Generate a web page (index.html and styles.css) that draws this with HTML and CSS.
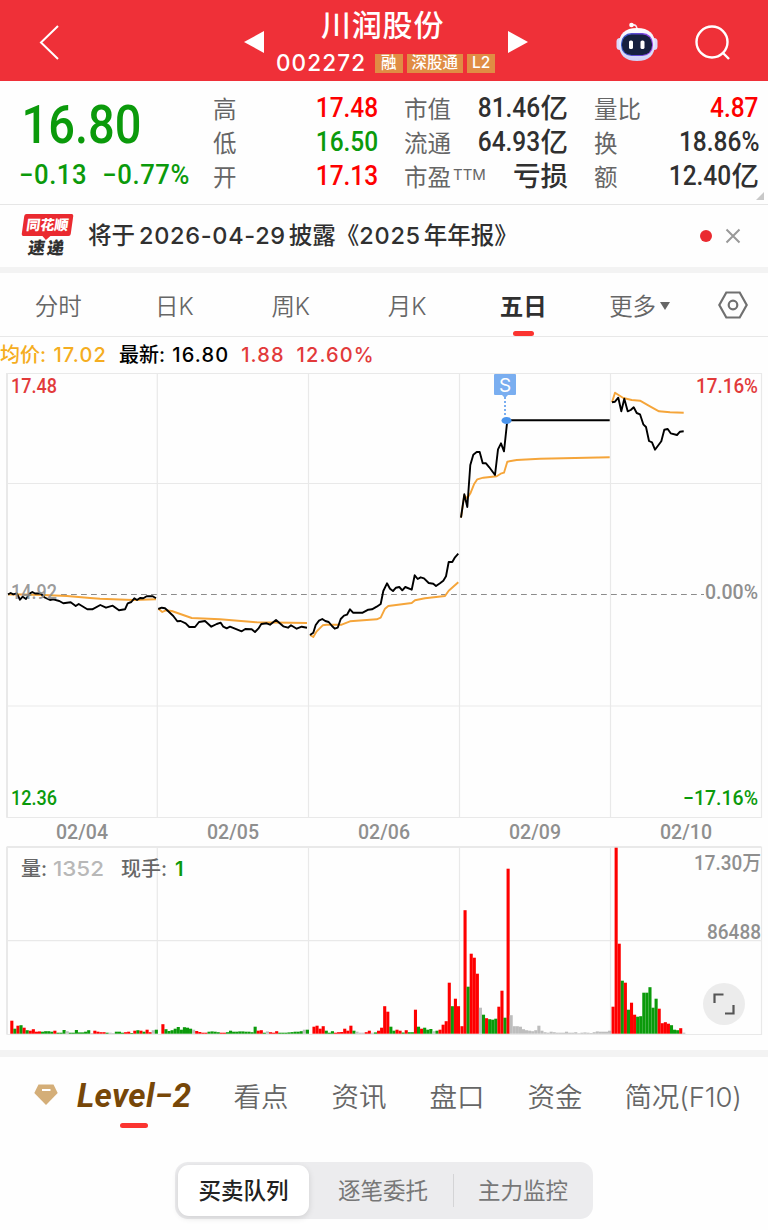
FILE: index.html
```html
<!DOCTYPE html>
<html lang="zh-CN">
<head>
    <meta charset="UTF-8">
    <title>川润股份 002272</title>
    <link rel="stylesheet" href="styles.css">
</head>
<body>
    <header class="topbar">
        <svg class="back" width="22" height="36" viewBox="0 0 22 36"><path d="M20 2 3 18.500 20 35"/></svg>
        <svg class="prev" width="20" height="22" viewBox="0 0 20 22"><path d="M0 11 20 0V22z"/></svg>
        <div class="stock">
            <h1>川润股份</h1>
            <div class="code-row">
                <span class="code">002272</span>
                <span class="tag">融</span>
                <span class="tag">深股通</span>
                <span class="tag">L2</span>
            </div>
        </div>
        <svg class="next" width="20" height="22" viewBox="0 0 20 22"><path d="M20 11 0 0V22z"/></svg>
        <svg class="robot" width="44" height="42" viewBox="0 0 44 42">
            <defs>
                <linearGradient id="head" x1="0" y1="0" x2="0" y2="1"><stop offset="0" stop-color="#fff"/><stop offset="1" stop-color="#cfd0f7"/></linearGradient>
                <linearGradient id="face" x1="0" y1="0" x2="1" y2="0"><stop offset="0" stop-color="#355cc4"/><stop offset="0.600" stop-color="#6a45d8"/><stop offset="1" stop-color="#a04be8"/></linearGradient>
            </defs>
            <path d="M21 9C21 5 19.500 3.500 16.500 4" fill="none" stroke="#f4e6f4" stroke-width="1.600"/>
            <circle cx="15.500" cy="4" r="2.300" fill="#fff"/>
            <rect x="0.500" y="17" width="7" height="12" rx="3.500" fill="#dcd9fa"/>
            <rect x="34.500" y="17" width="7" height="12" rx="3.500" fill="#dcd9fa"/>
            <path d="M21 7C33 7 39 13 39 23 39 34 33 40 21 40S3 34 3 23C3 13 9 7 21 7z" fill="url(#head)"/>
            <rect x="5" y="12" width="32" height="23" rx="10.500" fill="url(#face)"/>
            <rect x="6" y="13.500" width="30" height="20.500" rx="9.500" fill="#16203f"/>
            <rect x="13" y="19.500" width="4" height="8.500" rx="1.600" fill="#fff"/>
            <rect x="24.500" y="19.500" width="4" height="8.500" rx="1.600" fill="#fff"/>
        </svg>
        <svg class="search" width="36" height="36" viewBox="0 0 36 36"><circle cx="17" cy="17" r="15.500"/><path d="M28 28 34 34"/></svg>
    </header>

    <section class="quote">
        <div class="price">
            <strong>16.80</strong>
            <div class="change"><span>−0.13</span><span>−0.77%</span></div>
        </div>
        <dl class="stats">
            <div><dt>高</dt><dd class="up"><b>17.48</b></dd></div>
            <div><dt>市值</dt><dd><b>81.46</b>亿</dd></div>
            <div><dt>量比</dt><dd class="up"><b>4.87</b></dd></div>
            <div><dt>低</dt><dd class="down"><b>16.50</b></dd></div>
            <div><dt>流通</dt><dd><b>64.93</b>亿</dd></div>
            <div><dt>换</dt><dd><b>18.86%</b></dd></div>
            <div><dt>开</dt><dd class="up"><b>17.13</b></dd></div>
            <div><dt>市盈<small>TTM</small></dt><dd>亏损</dd></div>
            <div><dt>额</dt><dd><b>12.40</b>亿</dd></div>
        </dl>
        <i class="corner"></i>
    </section>

    <section class="notice">
        <div class="brand">
            <span class="brand-top">同花顺</span>
            <span class="brand-bottom">速递</span>
        </div>
        <p>将于<b>2026-04-29</b>披露《<b class="year">2025</b>年年报》</p>
        <i class="dot"></i>
        <svg class="close" width="16" height="16" viewBox="0 0 16 16"><path d="M1.500 1.500 14.500 14.500M14.500 1.500 1.500 14.500"/></svg>
    </section>

    <nav class="periods">
        <a>分时</a>
        <a>日K</a>
        <a>周K</a>
        <a>月K</a>
        <a class="active">五日</a>
        <a class="more">更多<i></i></a>
        <svg class="setting" width="30" height="28" viewBox="0 0 30 28"><path d="M8.300 1.500H21.700L28.700 14 21.700 26.500H8.300L1.300 14z"/><circle cx="15" cy="14" r="4.300"/></svg>
    </nav>

    <div class="legend">
        <span class="avg">均价: <b>17.02</b></span>
        <span>最新: <b>16.80</b></span>
        <span class="rise"><b>1.88</b></span>
        <span class="rise"><b>12.60%</b></span>
    </div>

    <svg class="chart" width="768" height="677" viewBox="0 373 768 677">
        <g class="grid">
            <path d="M7 373.500H761.500V817.500H7zM7 483.500H761M7 706H761"/>
            <path d="M157.300 374V817M308.500 374V817M459.500 374V817M610.500 374V817"/>
            <path d="M7 847H761.500V1034.500H7zM7 940.700H761"/>
            <path d="M157.300 847V1034M308.500 847V1034M459.500 847V1034M610.500 847V1034"/>
            <path class="edge" d="M7 373V817.500M7 847V1034M7 847H761"/>
        </g>
        <path class="zero" d="M61 594.500H704"/>
        <g class="avg-line">
            <polyline points="8,594.5 13,594.3 43,595 67,596 90,598 100,598.7 133,600 156,599.3"/>
            <polyline points="158.3,608.7 162.3,612 165.7,610.3 171.7,611 191.7,618 220,619.3 256.7,622.3 307,623"/>
            <polyline points="310,635 313.3,637 316.7,631.3 322.7,625.3 326.7,624.7 341.7,624.7 350,621.3 376.7,619.3 380.7,617.7 385,608.7 388.3,606 411.7,603 415,600.3 425,598.3 445,596 448.7,590.7 458.3,582.3"/>
            <polyline points="461,517.7 464.3,495.3 467.3,498.3 470.7,492.7 474,484.3 477.3,479.3 483.3,477.7 496.7,476.3 500.7,473.7 504,472.7 507.3,461.7 516.7,460 540,458.7 609.7,457.3"/>
            <polyline points="612,402.3 615,392.7 623.3,398 631.7,400 640,400.7 650,406.3 659,411.3 670,412.3 683.7,412.7"/>
        </g>
        <g class="price-line">
            <polyline points="8,594.3 10.7,593 13.3,594.3 16.7,593.3 20,599.7 22.7,596.7 26,599 30,593.3 32.3,592 35,593.5 40.7,593.5 44.7,597.5 50,600 53.3,599.3 59.3,601 63.3,603.3 70.7,602.3 75.7,606 78.7,604 87.3,609.3 92.3,609.3 100.3,605 106,607.7 112.7,605.7 119,610.3 125,609.3 127.7,603.3 131.3,602 134.3,598.3 137,600 140,598 143.3,598.3 146.7,596.3 152.7,596.3 156,598.3"/>
            <polyline points="158.3,609 161.7,607.7 165,608.3 168.3,611.3 173.3,616 177.3,621.3 180.7,621 185.7,623.3 189.3,627 195,627 199,622 205,621 211.3,626.7 216.7,624 220.7,622.7 223.3,626.7 226.7,628.3 230,626.7 241.7,631.3 245.3,629 251.7,629.3 255,632 258.3,628.7 261.3,624 266.7,623.3 270,624.7 276,620 283.3,626.3 288,627.7 291,625.3 296.7,628.7 301.7,626.7 307,627.7"/>
            <polyline points="310,635 313.3,632.7 315.7,625 319,620.7 322.3,619 325.3,621 328.7,622 332,626 334.7,628.7 337.7,627.7 340.7,619 344,615.7 347,614.7 350,609.3 353,612.7 362.7,612.7 368.3,609.7 372,609.3 376.7,606.7 380.7,604 383.3,591 387,583.3 390,588.7 393,591 396,587.7 399.3,587 402.3,590.3 405.3,587 411.7,589.7 414.7,575.3 417.7,579 420.7,577.3 424,578.3 428.7,583 433.3,583.7 436,586 440,583.3 443.3,580.7 446,576.3 448.7,562 452.3,562 455,557.3 458.3,553.7"/>
            <polyline points="461,517.7 464.3,494.3 467.3,507 470.3,465 473.3,454.7 476.7,452 479.7,452 482.7,463.3 486,463.3 489.3,467.3 495,475 498,449.3 501,443.3 504,451.3 507.3,420.3 609.7,420.3"/>
            <polyline points="612,402.3 615,401.7 618.3,397.7 621.3,411.3 624.3,398.7 627.7,411.3 630.7,410 633.7,407.3 636.7,413 640,414.3 643.3,424.3 646,427 649,441 652,442.3 655,449.7 661.3,441.3 664.3,429.7 667.7,429 670.7,433.3 677,435 680,431.7 683.7,431.3"/>
        </g>
        <g class="sell">
            <path d="M505 397V416"/>
            <path class="flag" d="M495 374H515a1 1 0 0 1 1 1V394a1 1 0 0 1-1 1H508L505 398 502 395H495a1 1 0 0 1-1-1V375a1 1 0 0 1 1-1z"/>
            <ellipse cx="506.500" cy="420.500" rx="5" ry="3.600"/>
            <text x="505" y="391.500" text-anchor="middle">S</text>
        </g>
        <text class="muted base" x="11" y="599" textLength="46" lengthAdjust="spacingAndGlyphs">14.92</text>
        <text class="red" x="11" y="393" textLength="46" lengthAdjust="spacingAndGlyphs">17.48</text>
        <text class="red" x="696" y="393" textLength="62" lengthAdjust="spacingAndGlyphs">17.16%</text>
        <text class="muted" x="705" y="599" textLength="53" lengthAdjust="spacingAndGlyphs">0.00%</text>
        <text class="green" x="11" y="805" textLength="46" lengthAdjust="spacingAndGlyphs">12.36</text>
        <text class="green" x="683" y="805" textLength="75" lengthAdjust="spacingAndGlyphs">−17.16%</text>
        <g class="muted">
            <text x="56" y="838.500" textLength="52" lengthAdjust="spacingAndGlyphs">02/04</text>
            <text x="207" y="838.500" textLength="52" lengthAdjust="spacingAndGlyphs">02/05</text>
            <text x="358" y="838.500" textLength="52" lengthAdjust="spacingAndGlyphs">02/06</text>
            <text x="509" y="838.500" textLength="52" lengthAdjust="spacingAndGlyphs">02/09</text>
            <text x="660" y="838.500" textLength="52" lengthAdjust="spacingAndGlyphs">02/10</text>
            <text x="694" y="869.500" textLength="67" lengthAdjust="spacingAndGlyphs">17.30万</text>
            <text x="707" y="939" textLength="54" lengthAdjust="spacingAndGlyphs">86488</text>
        </g>
        <g id="volume"></g>
        <g class="vol-legend">
            <text x="21" y="876">量:</text>
            <text class="pale" x="53" y="876" textLength="51" lengthAdjust="spacingAndGlyphs">1352</text>
            <text x="121" y="876">现手:</text>
            <text class="now" x="175" y="876">1</text>
        </g>
        <g class="expand">
            <circle cx="724" cy="1004" r="21"/>
            <path d="M714.500 1003V994.500H723.500M733.500 1005V1013.500H725"/>
        </g>
    </svg>

    <nav class="sections">
        <svg class="diamond" width="24" height="22" viewBox="0 0 24 22"><path d="M4.500 0.500H19.500L23.700 9 12 21 0.300 9z"/><path class="shine" d="M8 6H16.500"/></svg>
        <a class="level">Level−2</a>
        <a>看点</a>
        <a>资讯</a>
        <a>盘口</a>
        <a>资金</a>
        <a>简况(F10)</a>
    </nav>

    <div class="segment">
        <button class="on">买卖队列</button>
        <button>逐笔委托</button>
        <button>主力监控</button>
    </div>

    <script>
        // one string per day: height + colour (r up, g down, n flat), 49 slots each
        const days = [
            '0n 13r 5g 8r 8.5g 6r 3.5g 3r 4.5r 2r 2.3r 2g 2.5g 2.5g 2g 3r 1g 1g 3.7g 2.5n 1g 1g 3.7g 1.3g 1.3g 2g 3.5g 0.7n 3r 2r 1.5r 1.5r 1g 1n 0.7n 2g 2g 1g 1.5r 2r 0.7g 3r 3.5g 3r 2g 4r 1.5r 3.5n 4g',
            '0n 9.5r 4.5g 2.7g 3.5g 5g 6.7g 4g 6.5g 6g 5g 4n 2.7r 1.7r 1r 1r 2g 2.3g 2g 1.5g 1r 1r 1.5g 3g 2g 2g 2.3g 2.3g 2g 2g 1.5g 7g 3r 3.5r 1g 2.3n 1.5r 1r 2.5r 1g 1g 1g 1.3g 1.6g 2g 2g 2.5g 4n 4g',
            '0n 7r 8r 5r 7.5r 3g 1g 2.5g 1r 1.5r 1.7r 5r 3r 8r 3g 2n 1n 1n 1.5r 3r 1n 1.3g 3r 6r 27.5r 22r 7g 3g 4r 3r 1.2g 3.5r 1.5g 1.5g 24r 7g 5r 6g 4g 4.7g 2.5n 3g 4r 9r 12.5r 51r 27.5g 35r 27.5r',
            '7.5r 123.5r 47g 80r 76r 60r 26n 19g 15.5r 14.5g 14g 15g 27r 43r 16g 165r 18.5n 7.5n 7.5n 7n 4.5n 3.5n 3n 2.5n 3.5n 8n 3n 1.5n 1n 2n 1.5n 1n 1n 1n 2n 1n 1n 1.5n 0.5n 1n 1.3n 1n 0.7n 1.5n 2.3n 2n 2n 2n 3n',
            '27r 186r 90r 53g 51r 24g 31r 19r 17g 17.5g 41g 41g 46.5g 26g 35g 25r 10.5r 11.5r 10r 8.5g 4g 3.5g 5.5r 1n'
        ];
        const colors = { r: '#fe0000', g: '#0b9a0b', n: '#bdbdbd' };
        const volume = document.getElementById('volume');

        days.forEach((day, d) => {
            day.split(' ').forEach((bar, i) => {
                const h = parseFloat(bar);
                const rect = document.createElementNS('http://www.w3.org/2000/svg', 'rect');
                rect.setAttribute('x', (7.2 + d * 151.08 + i * 3.075).toFixed(2));
                rect.setAttribute('y', 1033.7 - h);
                rect.setAttribute('width', 3.1);
                rect.setAttribute('height', h);
                rect.setAttribute('fill', colors[bar.slice(-1)]);
                volume.appendChild(rect);
            });
        });
    </script>
</body>
</html>
```
FILE: styles.css
```css
* {
    box-sizing: border-box;
}
body {
    margin: 0;
    width: 768px;
    height: 1230px;
    overflow: hidden;
    background-color: #fefefe;
    color: #303030;
    font-family: Inter, "Noto Sans CJK SC", sans-serif;
}
svg {
    display: block;
    flex: none;
}

/* top bar */
.topbar {
    display: flex;
    align-items: flex-start;
    height: 81px;
    background-color: #ef3038;
    color: #fff;
}
.back {
    margin: 24px 0 0 38px;
    fill: none;
    stroke: #fff;
    stroke-width: 2;
}
.prev, .next {
    margin-top: 31px;
    fill: #fff;
}
.prev {
    margin-left: 184px;
}
.next {
    margin-left: 14px;
}
.stock {
    width: 218px;
    margin-left: 12px;
}
h1 {
    margin: 0 0 0 45px;
    height: 49px;
    line-height: 50px;
    font-size: 30px;
    font-weight: 500;
    letter-spacing: 0.8px;
    white-space: nowrap;
}
.code-row {
    display: flex;
    align-items: center;
    height: 28px;
}
.code {
    flex: none;
    width: 99px;
    font-size: 22.500px;
    font-weight: 500;
    line-height: 26px;
    letter-spacing: 1.100px;
}
.tag {
    flex: none;
    height: 19px;
    margin-right: 4px;
    padding: 0 5px;
    background-color: #e08c44;
    font-size: 15.500px;
    font-weight: 500;
    line-height: 18px;
    white-space: nowrap;
}
.tag:nth-child(2) {
    padding: 0 6px;
}
.robot {
    margin: 21px 0 0 88px;
}
.search {
    margin: 25px 0 0 35px;
    fill: none;
    stroke: #fff;
    stroke-width: 2.400;
}

/* quote */
.quote {
    position: relative;
    display: flex;
    height: 124px;
    padding-top: 10px;
    border-bottom: 1px solid #e6e6e6;
}
.price {
    width: 213px;
    padding-left: 19px;
    color: #0b9a0b;
    font-family: Roboto, sans-serif;
}
.price strong {
    display: block;
    height: 66px;
    padding-left: 3px;
    font-size: 54px;
    font-weight: 500;
    line-height: 68px;
    transform: scaleX(0.87);
    transform-origin: left;
}
.change {
    display: flex;
    gap: 16px;
    width: 200px;
    font-size: 27px;
    font-weight: 500;
    line-height: 36px;
    letter-spacing: 0.6px;
    transform: scaleX(0.95);
    transform-origin: left;
    white-space: nowrap;
}
.stats {
    display: grid;
    grid-template-columns: 165px 164px 165px;
    grid-auto-rows: 34px;
    column-gap: 26px;
    margin: 0;
}
.stats div {
    display: flex;
    justify-content: space-between;
    align-items: center;
    white-space: nowrap;
}
dt {
    color: #666;
    font-size: 23.500px;
}
dt small {
    margin-left: 2px;
    font-size: 15px;
    letter-spacing: 0;
    vertical-align: 6px;
}
dd {
    display: flex;
    align-items: center;
    margin: 0;
    font-size: 27.500px;
    font-weight: 500;
    line-height: 34px;
}
dd b {
    font-family: Roboto, sans-serif;
    font-weight: 500;
    transform: scaleX(0.89);
    transform-origin: right;
}
.up {
    color: #fe0000;
}
.down {
    color: #0b9a0b;
}
.corner {
    position: absolute;
    right: 4px;
    bottom: 4px;
    border-left: 8px solid transparent;
    border-bottom: 8px solid #c8c8c8;
}

/* notice */
.notice {
    display: flex;
    align-items: center;
    height: 68px;
    padding: 0 27px 0 22px;
    border-bottom: 6px solid #f3f3f3;
}
.brand {
    width: 52px;
    height: 44px;
    font-weight: 900;
    white-space: nowrap;
}
.brand span {
    display: block;
    transform: skewX(-8deg);
}
.brand-top {
    position: relative;
    width: 49px;
    height: 22px;
    margin-left: 1px;
    border-radius: 2px;
    background-color: #ea2a30;
    color: #fff;
    font-size: 14px;
    line-height: 21px;
    text-align: center;
}
.brand-top::after {
    content: "";
    position: absolute;
    left: 21px;
    top: 22px;
    border: 4px solid transparent;
    border-top-color: #ea2a30;
    border-bottom: 0;
}
.brand-bottom {
    margin-left: 6px;
    font-size: 17px;
    line-height: 24px;
    letter-spacing: 2px;
}
.notice p {
    margin: 0 auto 0 14px;
    font-size: 23.500px;
    font-weight: 500;
    line-height: 34px;
    white-space: nowrap;
}
.notice b {
    margin: 0 3px 0 4px;
    font-weight: 500;
    letter-spacing: 0.7px;
}
.notice .year {
    margin: 0 3px 0 0;
}
.dot {
    width: 12px;
    height: 12px;
    margin-right: 13px;
    border-radius: 50%;
    background-color: #ea2a30;
}
.close {
    fill: none;
    stroke: #999;
    stroke-width: 2;
}

/* period tabs */
.periods {
    display: flex;
    align-items: center;
    height: 64px;
    border-bottom: 1px solid #e8e8e8;
    color: #666;
    font-size: 23.500px;
    font-weight: 350;
}
.periods a {
    position: relative;
    width: 116.300px;
    text-align: center;
    white-space: nowrap;
}
.periods .active {
    color: #303030;
    font-weight: 700;
}
.active::after, .level::after {
    content: "";
    position: absolute;
    left: 48px;
    bottom: -14px;
    width: 21px;
    height: 5px;
    border-radius: 3px;
    background-color: #fb3430;
}
.more i {
    display: inline-block;
    margin-left: 4px;
    border: 5.500px solid transparent;
    border-top: 8px solid #666;
    border-bottom: 0;
    vertical-align: 5px;
}
.setting {
    margin-left: 20px;
    fill: none;
    stroke: #707070;
    stroke-width: 2.200;
}

/* legend */
.legend {
    display: flex;
    height: 36px;
    gap: 12px;
    color: #000;
    font-size: 20px;
    font-weight: 500;
    line-height: 36px;
    white-space: nowrap;
}
.legend b {
    margin-left: 2px;
    font-weight: 550;
    letter-spacing: 1.100px;
}
.legend .rise b {
    margin-left: 0;
}
.avg {
    color: #f5ad20;
}
.rise {
    color: #e23a3a;
}

/* chart */
.chart {
    font-family: Roboto, "Noto Sans CJK SC", sans-serif;
    font-size: 20.500px;
}
.grid path {
    fill: none;
    stroke: #e9e9e9;
    stroke-width: 1.200;
}
.grid .edge {
    stroke-width: 2;
}
.zero {
    stroke: #8c8c8c;
    stroke-width: 1.200;
    stroke-dasharray: 5.800 4.200;
}
.avg-line, .price-line {
    fill: none;
    stroke: #000;
    stroke-width: 1.900;
    stroke-linejoin: round;
}
.avg-line {
    stroke: #f5a53a;
}
.sell path {
    stroke: #7aaef0;
    stroke-width: 2;
    stroke-dasharray: 2 2;
}
.sell .flag {
    fill: #7aaef0;
    stroke: none;
}
.sell ellipse {
    fill: #4a94ec;
}
.sell text {
    fill: #fff;
    font-family: Inter, sans-serif;
    font-size: 19px;
}
.red {
    fill: #e23a3a;
    font-weight: 500;
}
.green {
    fill: #0b9a0b;
    font-weight: 500;
}
.muted {
    fill: #8f8f8f;
    font-weight: 500;
}
.base {
    fill-opacity: 0.9;
}
.vol-legend {
    fill: #666;
    font-family: Inter, "Noto Sans CJK SC", sans-serif;
    font-size: 20px;
    font-weight: 500;
}
.pale {
    fill: #b8b8b8;
}
.now {
    fill: #0b9a0b;
    font-weight: 600;
}
.expand circle {
    fill: #ececec;
}
.expand path {
    fill: none;
    stroke: #555;
    stroke-width: 2.200;
}

/* section tabs */
.sections {
    display: flex;
    align-items: center;
    height: 96px;
    padding: 0 0 14px 34px;
    border-top: 7px solid #f3f3f3;
    color: #666;
    font-size: 27.500px;
    font-weight: 350;
    white-space: nowrap;
}
.sections a {
    margin-right: 43px;
}
.sections a:last-child {
    margin-left: -1px;
    letter-spacing: -0.1px;
}
.diamond {
    fill: #d4ae78;
}
.shine {
    stroke: #fff;
    stroke-width: 2;
}
.sections .level {
    position: relative;
    width: 115px;
    margin: 2px 42px 0 19px;
    color: #774708;
    font-family: Roboto, sans-serif;
    font-size: 33px;
    font-style: italic;
    font-weight: 700;
    letter-spacing: 0.3px;
}
.level::after {
    left: 43px;
    bottom: -13px;
    width: 28px;
}

/* segmented control */
.segment {
    display: flex;
    align-items: center;
    width: 418px;
    height: 57px;
    margin: 16px 0 0 175px;
    padding: 3px;
    border-radius: 13px;
    background-color: #ececee;
}
.segment button {
    flex: 1;
    height: 33px;
    padding: 0 0 0 4px;
    border: none;
    background: none;
    color: #777;
    font-family: inherit;
    font-size: 22.500px;
    line-height: 30px;
}
.segment button:last-child {
    flex: 0 0 137px;
    padding-left: 2px;
    border-left: 1.500px solid #d4d4d6;
}
.segment .on {
    flex: 0 0 131px;
    height: 51px;
    padding-left: 0;
    border-radius: 11px;
    background-color: #fff;
    box-shadow: 0 2px 6px rgba(0, 0, 0, 0.12);
    color: #222;
    font-weight: 500;
}
```
